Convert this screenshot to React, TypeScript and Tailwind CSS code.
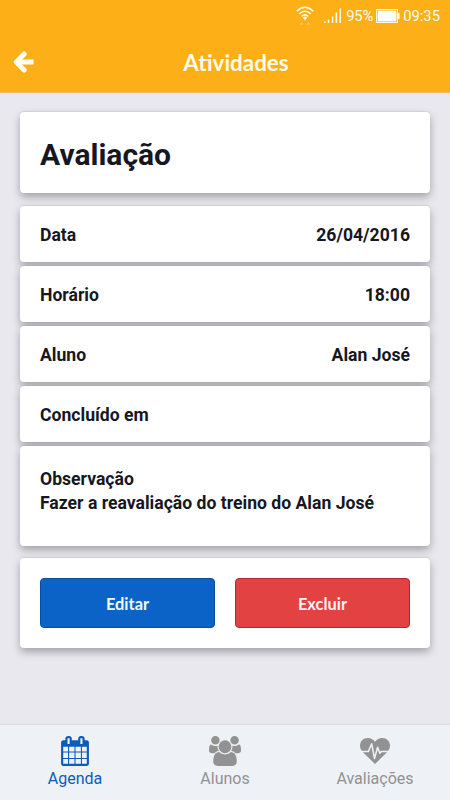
import clsx from "clsx";
import type { ReactNode } from "react";

const details = [
  { label: "Data", value: "26/04/2016" },
  { label: "Horário", value: "18:00" },
  { label: "Aluno", value: "Alan José" },
  { label: "Concluído em", value: "" },
];

function CalendarIcon() {
  return (
    <svg className="size-[30px]" viewBox="0 0 1792 1792" fill="currentColor">
      <path d="M192 1664h288v-288h-288v288zm352 0h320v-288h-320v288zm-352-352h288v-320h-288v320zm352 0h320v-320h-320v320zm-352-384h288v-288h-288v288zm736 736h320v-288h-320v288zm-384-736h320v-288h-320v288zm768 736h288v-288h-288v288zm-384-352h320v-320h-320v320zm-352-864v-288q0-13-9.5-22.5t-22.5-9.5h-64q-13 0-22.5 9.5t-9.5 22.5v288q0 13 9.5 22.5t22.5 9.5h64q13 0 22.5-9.5t9.5-22.5zm736 864h288v-320h-288v320zm-384-384h320v-288h-320v288zm384 0h288v-288h-288v288zm32-480v-288q0-13-9.5-22.5t-22.5-9.5h-64q-13 0-22.5 9.5t-9.5 22.5v288q0 13 9.5 22.5t22.5 9.5h64q13 0 22.5-9.5t9.5-22.5zm384-64v1280q0 52-38 90t-90 38h-1408q-52 0-90-38t-38-90v-1280q0-52 38-90t90-38h128v-96q0-66 47-113t113-47h64q66 0 113 47t47 113v96h384v-96q0-66 47-113t113-47h64q66 0 113 47t47 113v96h128q52 0 90 38t38 90z" />
    </svg>
  );
}

function UsersIcon() {
  return (
    <svg className="h-[30px] w-8" viewBox="0 0 1920 1792" fill="currentColor">
      <path d="M593 896q-162 5-265 128h-134q-82 0-138-40.5t-56-118.5q0-353 124-353 6 0 43.5 21t97.5 42.5 119 21.5q67 0 133-23-5 37-5 66 0 139 81 256zm1071 637q0 120-73 189.5t-194 69.5h-874q-121 0-194-69.5t-73-189.5q0-53 3.5-103.5t14-109 26.5-108.5 43-97.5 62-81 85.5-53.5 111.5-20q10 0 43 21.5t73 48 107 48 135 21.5 135-21.5 107-48 73-48 43-21.5q61 0 111.5 20t85.5 53.5 62 81 43 97.5 26.5 108.5 14 109 3.5 103.5zm-1024-1277q0 106-75 181t-181 75-181-75-75-181 75-181 181-75 181 75 75 181zm704 384q0 159-112.5 271.5t-271.5 112.5-271.5-112.5-112.5-271.5 112.5-271.5 271.5-112.5 271.5 112.5 112.5 271.5zm576 225q0 78-56 118.5t-138 40.5h-134q-103-123-265-128 81-117 81-256 0-29-5-66 66 23 133 23 59 0 119-21.5t97.5-42.5 43.5-21q124 0 124 353zm-128-609q0 106-75 181t-181 75-181-75-75-181 75-181 181-75 181 75 75 181z" />
    </svg>
  );
}

function HeartbeatIcon() {
  return (
    <svg className="size-[30px]" viewBox="0 0 30 30">
      <path fill="currentColor" d="M15 28 3 16.3C1.2 14.3 0 12.2 0 9.8 0 5.3 3.2 2 7.8 2c3 0 5.500 1.600 7.200 3.700C16.700 3.600 19.200 2 22.200 2 26.800 2 30 5.300 30 9.800c0 2.400-1.200 4.500-3 6.500Z" />
      <path fill="none" stroke="#eef1f6" strokeWidth="1.500" strokeLinejoin="round" d="M0 15.600h8.300L11.700 7.800l2.800 14.700 3.100-11.200 2.200 6 1.400-1.700H30" />
    </svg>
  );
}

const tabs = [
  { label: "Agenda", icon: CalendarIcon, active: true },
  { label: "Alunos", icon: UsersIcon, active: false },
  { label: "Avaliações", icon: HeartbeatIcon, active: false },
];

function StatusBar() {
  return (
    <div className="flex h-8 items-center justify-end pr-[10px] text-[14.8px] leading-none text-[#fffae8]">
      <svg className="mr-[10px] h-5 w-[18px]" viewBox="0 0 18 20" fill="none" stroke="currentColor">
        <path d="M.7 5.2Q9-2.6 17.3 5.2M3.2 7.9Q9 2.6 14.8 7.9M5.7 10.4Q9 7.4 12.3 10.4" strokeWidth="1.5" />
        <path d="M6.7 11.6Q9 9.6 11.3 11.6L9 14.4Z" fill="currentColor" stroke="none" />
        <path d="M3.5 18.500h4L5.500 16ZM10.500 18.500h4L12.500 16Z" fill="currentColor" stroke="none" opacity=".4" />
      </svg>
      <svg className="mr-[5px] h-4 w-[17px]" viewBox="0 0 17 16" fill="currentColor">
        <path d="M0 13.5h1.6v1.5H0ZM3.8 11.5h1.5V15H3.8ZM7.8 8.5h1.5V15H7.8ZM11.6 4.5h1.5V15h-1.5ZM15.4 .5H17V15h-1.6Z" />
      </svg>
      <span className="w-[27px] pt-px tracking-[-0.1px] whitespace-nowrap">95%</span>
      <svg className="mr-[3px] ml-[3px] h-[14px] w-[24px]" viewBox="0 0 24 14">
        <rect x=".5" y=".5" width="21" height="13" fill="none" stroke="currentColor" />
        <rect x="1.6" y="1.6" width="18.8" height="10.8" fill="#fff" />
        <path d="M22 4h1.6v6H22Z" fill="currentColor" />
      </svg>
      <span className="pt-px">09:35</span>
    </div>
  );
}

function Card({ className, children }: { className?: string; children?: ReactNode }) {
  return (
    <div className={clsx("rounded-[4px] bg-white px-5 shadow-[0_-1px_1px_rgba(0,0,0,0.06),0_4px_8px_rgba(0,0,0,0.3)]", className)}>
      {children}
    </div>
  );
}

export default function App() {
  return (
    <div className="flex h-[800px] w-[450px] flex-col overflow-hidden bg-[#e8e8ee] font-['Roboto',sans-serif] text-[#16171f]">
      <header className="h-[93px] shrink-0 border-b border-[#eebd62] bg-[#fcaf17]">
        <StatusBar />
        <div className="grid h-[60px] grid-cols-[60px_1fr_60px] items-center">
          <svg className="ml-[13px] h-[22px] w-[21px] text-[#fffef4]" viewBox="0 0 21 22" fill="none" stroke="currentColor" strokeWidth="5" strokeLinejoin="round">
            <path d="M11.2 3 3.3 11 11.2 19" strokeLinecap="round" />
            <path d="M4 11h16.5" />
          </svg>
          <h1 className="pt-0.5 pl-[22px] text-center font-['Lato',sans-serif] text-[22.4px] font-bold text-[#fffbe6]">Atividades</h1>
        </div>
      </header>

      <main className="grow px-5 pt-[19px]">
        <Card className="flex h-[81px] items-center">
          <h2 className="pt-[5px] text-[30px] leading-none font-bold">Avaliação</h2>
        </Card>

        <div className="mt-[13px] flex flex-col gap-1">
          {details.map((d) => (
            <Card key={d.label} className="flex h-14 items-center justify-between pt-0.5 text-[17.6px] font-bold">
              <span>{d.label}</span>
              <span>{d.value}</span>
            </Card>
          ))}
          <Card className="h-[100px] pt-[21px] text-[17.6px] leading-6 font-bold">
            <p>Observação</p>
            <p>Fazer a reavaliação do treino do Alan José</p>
          </Card>
        </div>

        <Card className="mt-3 grid h-[90px] grid-cols-2 items-center gap-5">
          <button className="h-[50px] rounded-[4px] border border-[#0a4d9b] bg-[#0c63c7] pt-[3px] font-['Lato',sans-serif] text-[16.4px] font-bold text-[#f2faff]">Editar</button>
          <button className="h-[50px] rounded-[4px] border border-[#ae2a30] bg-[#e34243] pt-[3px] font-['Lato',sans-serif] text-[16.4px] font-bold text-[#fff1f1]">Excluir</button>
        </Card>
      </main>

      <nav className="grid h-[76px] shrink-0 grid-cols-3 border-t border-[#d9dce2] bg-[#eef1f6]">
        {tabs.map((t) => (
          <div key={t.label} className={clsx("flex flex-col items-center pt-[11px]", t.active ? "text-[#0c5db8]" : "text-[#929292]")}>
            <t.icon />
            <span className="mt-px text-[16px] leading-6">{t.label}</span>
          </div>
        ))}
      </nav>
    </div>
  );
}
